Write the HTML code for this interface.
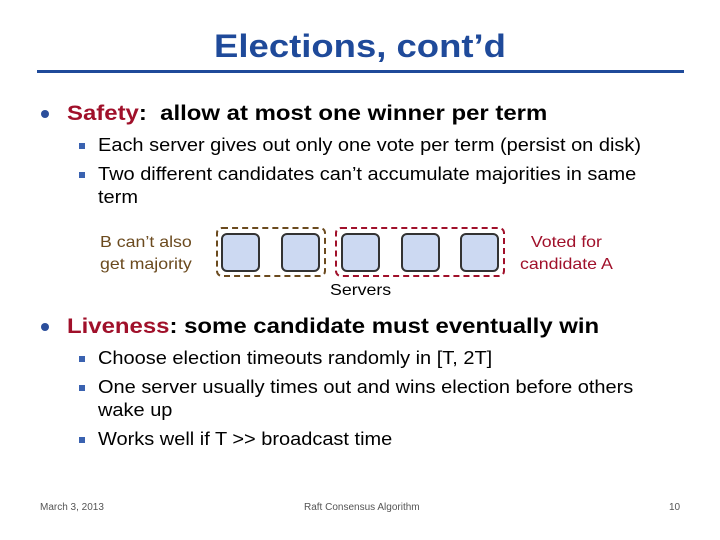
<!DOCTYPE html><html><head><style>
body{margin:0;width:720px;height:540px;background:#fff;position:relative;font-family:"Liberation Sans",sans-serif;overflow:hidden}
.a{position:absolute;white-space:nowrap;transform:scaleX(1.11);transform-origin:0 0}
.t{left:0;width:720px;text-align:center;top:28px;font-size:32px;font-weight:bold;color:#1F4A9A;transform:scaleX(1.14);transform-origin:360px 0}
.l1{font-size:21px;font-weight:bold;color:#000;transform:scaleX(1.14)}
.l2{font-size:18px;color:#000}
.d{position:absolute;width:8px;height:8px;border-radius:50%;background:#2B4E9B}
.s{position:absolute;width:6px;height:6px;background:#3A62B0}
.r{color:#A0102A}
.bx{position:absolute;width:35px;height:35px;border:2px solid #333;border-radius:6px;background:#CCD9F2;top:233px}
.sm{font-size:10px;color:#555;transform:none}
.n{transform:none}
</style></head><body>
<div class="a t">Elections, cont’d</div>
<div class="a n" style="left:37px;top:70px;width:647px;height:3px;background:#1F4A9A"></div>
<div class="d" style="left:41px;top:110px"></div>
<div class="a l1" style="left:67px;top:102px"><span class="r">Safety</span>:&nbsp; allow at most one winner per term</div>
<div class="s" style="left:79px;top:143px"></div>
<div class="a l2" style="left:98px;top:135px">Each server gives out only one vote per term (persist on disk)</div>
<div class="s" style="left:79px;top:172px"></div>
<div class="a l2" style="left:98px;top:164px">Two different candidates can’t accumulate majorities in same</div>
<div class="a l2" style="left:98px;top:187px">term</div>
<div class="a n" style="left:216px;top:227px;width:106px;height:46px;border:2px dashed #6B4A1E;border-radius:6px"></div>
<div class="a n" style="left:335px;top:227px;width:166px;height:46px;border:2px dashed #A0102A;border-radius:6px"></div>
<div class="bx" style="left:221px"></div><div class="bx" style="left:281px"></div><div class="bx" style="left:341px"></div><div class="bx" style="left:401px"></div><div class="bx" style="left:460px"></div>
<div class="a" style="left:100px;top:232px;font-size:16px;color:#6B4A1E;text-align:center;line-height:22px">B can’t also<br>get majority</div>
<div class="a" style="left:520px;top:232px;font-size:16px;color:#A0102A;text-align:center;line-height:22px">Voted for<br>candidate A</div>
<div class="a" style="left:330px;top:282px;font-size:16px">Servers</div>
<div class="d" style="left:41px;top:323px"></div>
<div class="a l1" style="left:67px;top:315px"><span class="r">Liveness</span>: some candidate must eventually win</div>
<div class="s" style="left:79px;top:356px"></div>
<div class="a l2" style="left:98px;top:348px">Choose election timeouts randomly in [T, 2T]</div>
<div class="s" style="left:79px;top:385px"></div>
<div class="a l2" style="left:98px;top:377px">One server usually times out and wins election before others</div>
<div class="a l2" style="left:98px;top:400px">wake up</div>
<div class="s" style="left:79px;top:437px"></div>
<div class="a l2" style="left:98px;top:429px">Works well if T &gt;&gt; broadcast time</div>
<div class="a sm" style="left:40px;top:502px">March 3, 2013</div>
<div class="a sm" style="left:304px;top:502px">Raft Consensus Algorithm</div>
<div class="a sm" style="left:669px;top:502px">10</div>
</body></html>
